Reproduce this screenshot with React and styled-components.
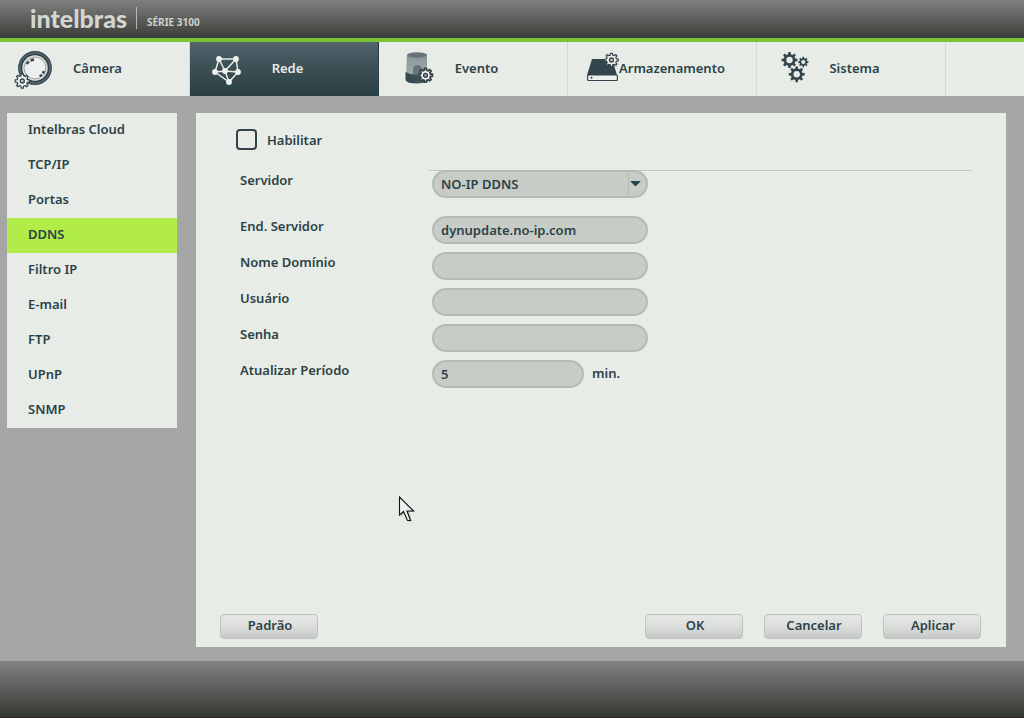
import React, { useState } from 'react';
import styled, { createGlobalStyle } from 'styled-components';

const GlobalStyle = createGlobalStyle`
  * {
    box-sizing: border-box;
  }

  body {
    margin: 0;
    background: #a6a6a6;
    color: #2c4248;
    font-family: 'Noto Sans', 'Open Sans', sans-serif;
    font-size: 13px;
    font-weight: 600;
    line-height: 20px;
  }

  button, input, select {
    font: inherit;
    color: inherit;
  }
`;

const Page = styled.div`
  min-height: 100vh;
  display: flex;
  flex-direction: column;
`;

const Header = styled.header`
  height: 42px;
  padding: 0 0 2px 30px;
  display: flex;
  align-items: center;
  background: linear-gradient(#7f7f7d, #5a5b58 55%, #3b3d39);
  border-bottom: 4px solid #7cc236;
`;

const Brand = styled.span`
  font-family: Lato, sans-serif;
  font-size: 25px;
  font-weight: 900;
  line-height: 24px;
  color: #d3d5d1;
`;

const Series = styled.span`
  height: 22px;
  margin-left: 9px;
  padding: 6px 0 0 10px;
  border-left: 1px solid #b4b6b2;
  font-size: 10px;
  font-weight: 700;
  line-height: 18px;
  color: #cfd1cd;
`;

const Tabs = styled.nav`
  display: flex;
  background: #e7ece6;
`;

const Tab = styled.a`
  flex: 0 1 189px;
  height: 54px;
  display: flex;
  align-items: center;
  text-decoration: none;
  white-space: nowrap;
  color: ${p => p.$active ? '#e7ece6' : '#2c4248'};
  background: ${p => p.$active ? 'linear-gradient(#53656c, #3d5056 45%, #293f44)' : 'none'};
  border-right: 1px solid ${p => p.$active ? '#293f44' : '#d3d8d3'};

  &:first-child {
    flex-basis: 190px;
  }
`;

const TabIcon = styled.svg`
  flex: none;
  width: 51px;
  height: 54px;
  overflow: visible;
`;

const TabLabel = styled.span`
  min-width: 93px;
  padding-bottom: 2px;
  text-align: center;
`;

const Main = styled.main`
  flex: 1;
  display: flex;
  align-items: flex-start;
  gap: 19px;
  padding: 17px 18px 14px 7px;
`;

const Side = styled.nav`
  flex: none;
  width: 170px;
  display: flex;
  flex-direction: column;
  background: #e7ece6;
`;

const SideLink = styled.a`
  height: 35px;
  padding: 6px 21px;
  text-decoration: none;
  color: #2c4248;
  background: ${p => p.$active ? '#b1ec48' : 'none'};
`;

const Panel = styled.form`
  position: relative;
  flex: 1;
  align-self: stretch;
  display: flex;
  flex-direction: column;
  background: #e7ece6;
`;

const Fields = styled.div`
  flex: 1;
  display: flex;
  flex-direction: column;
  gap: 8px;
  padding: 16px 34px 16px 40px;
`;

const Check = styled.label`
  align-self: flex-start;
  display: flex;
  align-items: center;
  gap: 10px;
  margin-bottom: 12px;
`;

const CheckBox = styled.input`
  appearance: none;
  width: 21px;
  height: 21px;
  margin: 0;
  border: 2px solid #34434a;
  border-radius: 4px;

  &:checked {
    background: #34434a;
    box-shadow: inset 0 0 0 3px #e7ece6;
  }
`;

const Row = styled.div`
  display: flex;
  height: 28px;
  padding-left: 4px;
  margin-bottom: ${p => p.$spaced ? '10px' : '0'};
`;

const Label = styled.label`
  flex: none;
  width: 189px;
`;

const Control = styled.div`
  flex: 1;
  display: flex;
  gap: 8px;
  padding-left: 3px;
  background: ${p => p.$ruled ? 'linear-gradient(#c3c8c3, #c3c8c3) top / 100% 1px no-repeat' : 'none'};
`;

const TextBox = styled.input`
  width: ${p => p.$short ? '152px' : '216px'};
  height: 28px;
  padding: 0 7px 1px;
  border: 2px solid #b4bab4;
  border-radius: 14px;
  background: #c7ccc6;
`;

const SelectWrap = styled.div`
  position: relative;
  width: 216px;
  height: 28px;
`;

const Select = styled.select`
  appearance: none;
  width: 100%;
  height: 28px;
  padding: 0 24px 1px 7px;
  border: 2px solid #b4bab4;
  border-radius: 14px;
  background: #c7ccc6;
`;

const SelectArrow = styled.svg`
  position: absolute;
  top: 0;
  right: 0;
  pointer-events: none;
`;

const Unit = styled.span`
  line-height: 26px;
`;

const Actions = styled.div`
  display: flex;
  gap: 21px;
  padding: 0 25px 8px 24px;
`;

const Button = styled.button`
  width: 98px;
  height: 25px;
  padding: 0 0 3px 2px;
  line-height: 18px;
  border: 1px solid #bfc2c0;
  border-radius: 4px;
  background: linear-gradient(#e6e8e6, #dcdedb 50%, #c5c8c4);
  margin-right: ${p => p.$apart ? 'auto' : '0'};
`;

const Pointer = styled.svg`
  position: absolute;
  left: 202px;
  top: 383px;
  pointer-events: none;
`;

const Footer = styled.footer`
  height: 57px;
  background: linear-gradient(#828282, #5c5e5b 50%, #353733);
  border-bottom: 1px solid #2d2628;
`;

const gearPath = (cx, cy, r, teeth = 8) => {
  const step = (Math.PI * 2) / teeth;
  const inner = r * 0.74;
  const points = [];
  for (let i = 0; i < teeth; i++) {
    [[-0.3, inner], [-0.19, r], [0.19, r], [0.3, inner]].forEach(([t, rad]) => {
      const a = (i + t) * step;
      points.push(`${(cx + rad * Math.sin(a)).toFixed(2)} ${(cy - rad * Math.cos(a)).toFixed(2)}`);
    });
  }
  return `M${points.join('L')}Z`;
};

const OutlineGear = ({ cx, cy, r, dark }) => (
  <>
    <path d={gearPath(cx, cy, r)} fill="#f1f3f0" stroke="#34434a" strokeWidth={dark ? 1.8 : 1.2} strokeLinejoin="round" />
    <circle cx={cx} cy={cy} r="2" fill={dark ? '#8d989b' : '#cbd0cd'} stroke="#34434a" strokeWidth="1.3" />
  </>
);

const SolidGear = ({ cx, cy, r }) => (
  <>
    <path d={gearPath(cx, cy, r)} fill="#34464d" />
    <circle cx={cx} cy={cy} r={r * 0.4} fill="#e7ece6" />
  </>
);

const CameraIcon = () => (
  <TabIcon viewBox="0 0 51 54" aria-hidden="true">
    <circle cx="35" cy="26" r="14.8" fill="#e3e7e4" stroke="#35454c" strokeWidth="4.2" />
    <circle cx="35" cy="26" r="15.3" fill="none" stroke="#76848a" strokeWidth="0.8" />
    <circle cx="35" cy="26" r="11" fill="#edf0ed" stroke="#8b9699" strokeWidth="0.9" />
    <path d="M26.5 22L29 19.5M30.5 18.5L34 17.5M39.5 34L42 33M43 31.5L44 29" fill="none" stroke="#34434a" strokeWidth="2.4" />
    <OutlineGear cx={22.3} cy={39} r={7.2} />
  </TabIcon>
);

const nodes = [[29, 17], [46, 17], [25, 30], [35, 29], [48, 30], [39, 40]];

const NetworkIcon = () => (
  <TabIcon viewBox="0 0 51 54" aria-hidden="true">
    <path d="M29 17H46L48 30L39 40L25 30ZM29 17L35 29L46 17M25 30L35 29L48 30M35 29L39 40" fill="none" stroke="#e7ece6" strokeWidth="1.5" />
    {nodes.map(([x, y]) => <circle key={`${x}-${y}`} cx={x} cy={y} r="2.9" fill="#f0f3f0" />)}
  </TabIcon>
);

const EventIcon = () => (
  <TabIcon viewBox="0 0 51 54" aria-hidden="true">
    <defs>
      <linearGradient id="glass" x1="0" y1="0" x2="0" y2="1">
        <stop offset="0" stopColor="#8b9598" />
        <stop offset="1" stopColor="#a3acae" />
      </linearGradient>
      <linearGradient id="base" x1="0" y1="0" x2="1" y2="0">
        <stop offset="0" stopColor="#34464d" />
        <stop offset="1" stopColor="#4b5d64" />
      </linearGradient>
    </defs>
    <path d="M28 13L27 34H48V13Z" fill="url(#glass)" />
    <ellipse cx="38" cy="13" rx="10" ry="2.8" fill="#66747a" />
    <path d="M34 33v-5q0-5 4.5-5t4.5 5v5Z" fill="#66757a" />
    <path d="M26.5 30Q37 36 48.5 30V38Q47 41.5 37.5 41.5T26.5 38Z" fill="url(#base)" />
    <OutlineGear cx={46.5} cy={33.3} r={7} dark />
  </TabIcon>
);

const StorageIcon = () => (
  <TabIcon viewBox="0 0 51 54" aria-hidden="true">
    <path d="M24 17H44L49 33H19Z" fill="#34464d" />
    <rect x="19.6" y="33" width="29.8" height="5.5" rx="1" fill="#eef1ed" stroke="#34434a" strokeWidth="1.2" />
    <circle cx="23.5" cy="35.7" r="1" fill="#34434a" />
    <OutlineGear cx={43.5} cy={18} r={6.8} />
  </TabIcon>
);

const SystemIcon = () => (
  <TabIcon viewBox="0 0 51 54" aria-hidden="true">
    <SolidGear cx={32.5} cy={18} r={8} />
    <SolidGear cx={46.3} cy={20} r={5.2} />
    <SolidGear cx={39.7} cy={32.3} r={8} />
  </TabIcon>
);

const tabs = [
  { label: 'Câmera', Icon: CameraIcon },
  { label: 'Rede', Icon: NetworkIcon },
  { label: 'Evento', Icon: EventIcon },
  { label: 'Armazenamento', Icon: StorageIcon },
  { label: 'Sistema', Icon: SystemIcon },
];

const sections = ['Intelbras Cloud', 'TCP/IP', 'Portas', 'DDNS', 'Filtro IP', 'E-mail', 'FTP', 'UPnP', 'SNMP'];

const App = () => {
  const [tab, setTab] = useState('Rede');
  const [section, setSection] = useState('DDNS');

  return (
    <>
      <GlobalStyle />
      <Page>
        <Header>
          <Brand>intelbras</Brand>
          <Series>SÉRIE 3100</Series>
        </Header>
        <Tabs>
          {tabs.map(({ label, Icon }) => (
            <Tab key={label} href="#" $active={label === tab} onClick={() => setTab(label)}>
              <Icon />
              <TabLabel>{label}</TabLabel>
            </Tab>
          ))}
        </Tabs>
        <Main>
          <Side>
            {sections.map(name => (
              <SideLink key={name} href="#" $active={name === section} onClick={() => setSection(name)}>{name}</SideLink>
            ))}
          </Side>
          <Panel onSubmit={e => e.preventDefault()}>
            <Fields>
              <Check>
                <CheckBox type="checkbox" />
                Habilitar
              </Check>
              <Row $spaced>
                <Label htmlFor="server">Servidor</Label>
                <Control $ruled>
                  <SelectWrap>
                    <Select id="server">
                      <option>NO-IP DDNS</option>
                    </Select>
                    <SelectArrow width="20" height="28" viewBox="0 0 20 28">
                      <path d="M0.5 1V28" stroke="#b4bab4" />
                      <path d="M3 11.5H12L7.5 16Z" fill="#2c4248" stroke="#2c4248" strokeLinejoin="round" />
                    </SelectArrow>
                  </SelectWrap>
                </Control>
              </Row>
              <Row>
                <Label htmlFor="address">End. Servidor</Label>
                <Control><TextBox id="address" defaultValue="dynupdate.no-ip.com" /></Control>
              </Row>
              <Row>
                <Label htmlFor="domain">Nome Domínio</Label>
                <Control><TextBox id="domain" /></Control>
              </Row>
              <Row>
                <Label htmlFor="user">Usuário</Label>
                <Control><TextBox id="user" /></Control>
              </Row>
              <Row>
                <Label htmlFor="password">Senha</Label>
                <Control><TextBox id="password" type="password" /></Control>
              </Row>
              <Row>
                <Label htmlFor="period">Atualizar Período</Label>
                <Control>
                  <TextBox id="period" $short defaultValue="5" />
                  <Unit>min.</Unit>
                </Control>
              </Row>
            </Fields>
            <Actions>
              <Button type="reset" $apart>Padrão</Button>
              <Button type="submit">OK</Button>
              <Button type="button">Cancelar</Button>
              <Button type="button">Aplicar</Button>
            </Actions>
            <Pointer width="20" height="28" viewBox="0 0 20 28" aria-hidden="true">
              <path d="M3 3V21L7 17L11 26L14 25L11 16H17Z" fill="#b5bab5" />
              <path d="M1.5 1V19L5.5 15.5L9.5 24.5H12.5L9 15H15.5Z" fill="#eef1ed" stroke="#101414" strokeWidth="1.1" />
            </Pointer>
          </Panel>
        </Main>
        <Footer />
      </Page>
    </>
  );
};

export default App;
